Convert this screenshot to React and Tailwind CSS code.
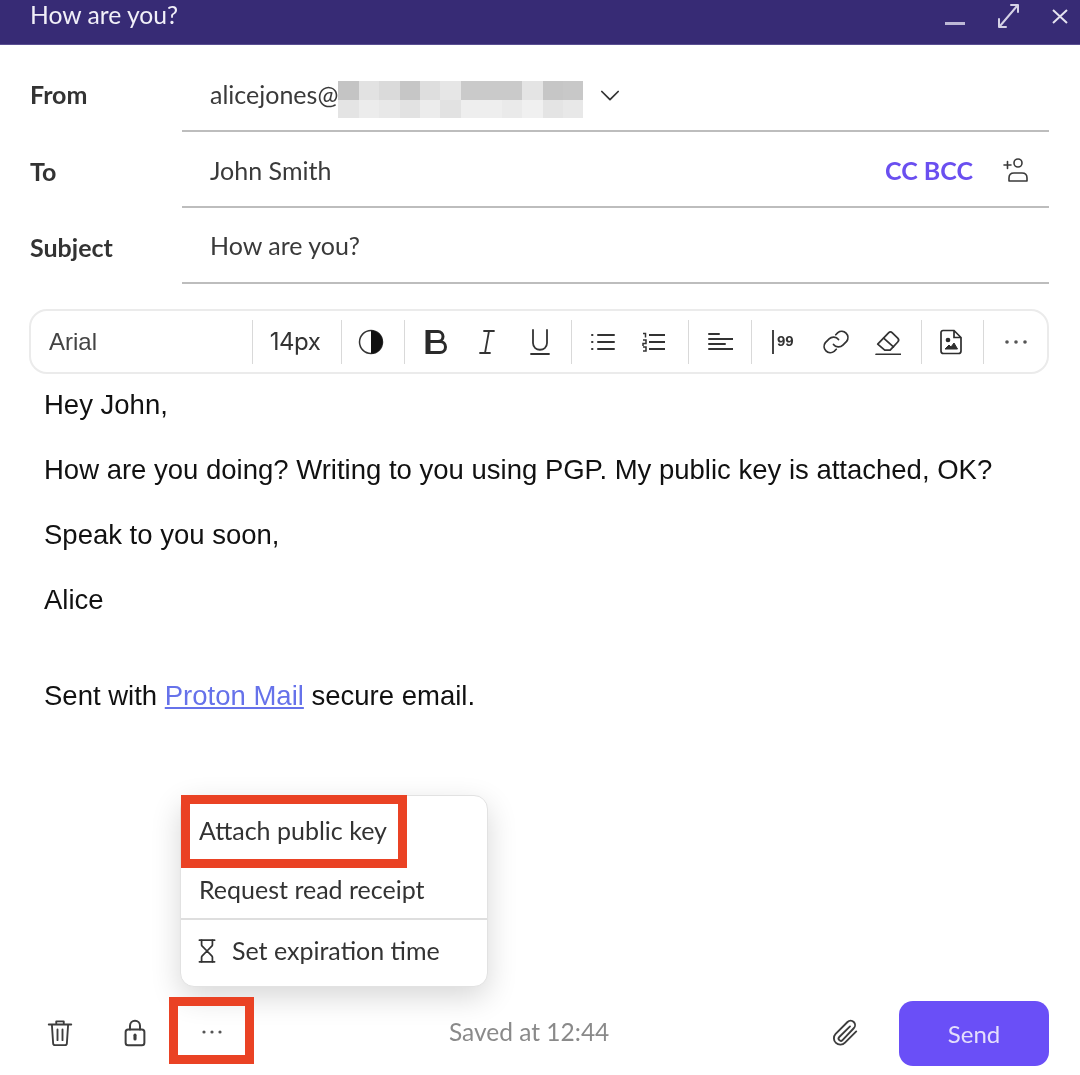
import { Hourglass } from 'lucide-react';

const lato = { fontFamily: 'Lato, sans-serif' };

const mosaicTop = ['#c4c4c4', '#e2e2e2', '#dadada', '#c6c6c6', '#dedede', '#e6e6e6', '#cacaca', '#cacaca', '#cacaca', '#e4e4e4', '#c6c6c6', '#c8c8c8'];
const mosaicBottom = ['#e4e4e4', '#ececec', '#e8e8e8', '#e2e2e2', '#ececec', '#e2e2e2', '#eeeeee', '#eeeeee', '#eaeaea', '#f0f0f0', '#e4e4e4', '#e8e8e8'];

const Icon = ({ w = 24, h = 24, vb = '0 0 24 24', children, sw = 1.5 }) => (
    <svg width={w} height={h} viewBox={vb} fill="none" stroke="currentColor" strokeWidth={sw} strokeLinecap="round" strokeLinejoin="round">
        {children}
    </svg>
);

const Segment = ({ className, children }) => (
    <div className={`flex h-[44px] shrink-0 items-center border-l border-[#d9d9d9] ${className}`}>{children}</div>
);

const Row = ({ label, height, children }) => (
    <div className={`flex items-center pl-[30px] pr-[31px] ${height}`}>
        <div className="w-[152px] shrink-0 pt-[3px] text-[25px] font-bold text-[#333]">{label}</div>
        <div className="flex h-full flex-1 items-center border-b-2 border-[#bdbdbd] pl-[28px] text-[25px] text-[#3a3a3a]">
            {children}
        </div>
    </div>
);

export default function App() {
    return (
        <div className="relative flex h-[1075px] w-[1080px] flex-col overflow-hidden bg-white blur-[0.5px]" style={lato}>
            {/* title bar */}
            <div className="flex h-[45px] shrink-0 items-start justify-between border-b border-[#5a4f92] bg-[#372b75] pl-[30px] pr-[11px] text-white">
                <span className="text-[24.700px] leading-[29px] text-[#f1eff8]">How are you?</span>
                <div className="flex items-start text-[#d5d2e6]">
                    <svg width="20" height="30" viewBox="0 0 20 30" className="mr-[25px]"><rect x="0" y="22" width="20" height="3" fill="#bdb8d6" /></svg>
                    <Icon w={30} h={30} vb="0 0 30 30" sw={2}>
                        <path d="M10 26 27 6M21 5h7v7M9 19v8h7" />
                    </Icon>
                    <svg width="18" height="30" viewBox="0 0 18 30" className="ml-[31px]" fill="none" stroke="#e4e2ef" strokeWidth="2"><path d="M2 10l14 13M16 10 2 23" /></svg>
                </div>
            </div>

            <Row label="From" height="h-[87px] pt-[10px]">
                <div className="flex w-full items-center pt-[5px]">
                    <span>alicejones@</span>
                    <div className="mt-[9px] flex w-[245px] flex-col">
                        <div className="flex h-[19px]">
                            {mosaicTop.map((c, i) => <div key={i} className="flex-1" style={{ backgroundColor: c }} />)}
                        </div>
                        <div className="flex h-[18px]">
                            {mosaicBottom.map((c, i) => <div key={i} className="flex-1" style={{ backgroundColor: c }} />)}
                        </div>
                    </div>
                    <span className="ml-[13px] flex text-[#333]">
                        <Icon w={28} h={28}><path d="m5 9 7 7 7-7" /></Icon>
                    </span>
                </div>
            </Row>
            <Row label="To" height="h-[76px]">
                <span className="pt-[4px]">John Smith</span>
                <span className="ml-auto pr-[29px] pt-[4px] text-[25px] font-bold text-[#6a4ff0]">CC BCC</span>
                <span className="mr-[19px] flex pt-[1px] text-[#3a3a3a]">
                    <Icon w={28} h={28} vb="0 0 28 28" sw={1.6}>
                        <circle cx="16" cy="7" r="4" />
                        <path d="M7 25v-3c0-3 2-5 5-5h8c3 0 5 2 5 5v3zM2 9h7M5.500 5.500v7" />
                    </Icon>
                </span>
            </Row>
            <Row label="Subject" height="h-[76px]">
                <span className="pt-[2px]">How are you?</span>
            </Row>

            {/* editor toolbar */}
            <div className="ml-[29px] mr-[31px] mt-[25px] flex h-[65px] shrink-0 items-center rounded-[18px] border-2 border-[#ebebeb] text-[#333]">
                <div className="w-[221px] shrink-0 pl-[18px] text-[24px] text-[#444]" style={{ fontFamily: '"Liberation Sans", sans-serif' }}>Arial</div>
                <Segment className="w-[89px] justify-center pr-[4px] text-[25px] text-[#333]">
                    <span style={{ fontFamily: 'Inter, sans-serif' }} className="text-[24px] tracking-[-0.5px]">14px</span>
                </Segment>
                <Segment className="w-[63px] justify-center pr-[4px]">
                    <svg width="26" height="26" viewBox="0 0 26 26"><circle cx="13" cy="13" r="11.5" fill="none" stroke="#333" strokeWidth="1.5" /><path d="M13 1.5a11.5 11.5 0 0 1 0 23z" fill="#111" /></svg>
                </Segment>
                <Segment className="w-[167px] pl-[18px]">
                    <div className="flex w-[54px] justify-start">
                        <svg width="26" height="28" viewBox="0 0 26 28" fill="none" stroke="#2a2a2a" strokeWidth="3"><path d="M4 3.500h11a5 5 0 0 1 0 10H4zM4 13.500h13a5.500 5.500 0 0 1 0 11H4zM6 3.500v21" /></svg>
                    </div>
                    <div className="flex w-[51px] justify-start">
                        <Icon w={20} h={26} vb="0 0 20 26" sw={1.8}><path d="M7 2h10M3 24h10M12 2 8 24" /></Icon>
                    </div>
                    <Icon w={24} h={28} vb="0 0 24 28" sw={1.8}><path d="M5 2v13c0 9 14 9 14 0V2M3 26h18" /></Icon>
                </Segment>
                <Segment className="w-[117px] pl-[19px]">
                    <div className="flex w-[51px]">
                        <Icon w={24} h={20} vb="0 0 24 20" sw={2}><path d="M7 3h16M7 10h16M7 17h16M1 3h.5M1 10h.5M1 17h.5" /></Icon>
                    </div>
                    <svg width="24" height="20" viewBox="0 0 24 20" fill="none" stroke="#333" strokeWidth="2"><path d="M7 3h16M7 10h16M7 17h16" /><path d="M1 1.500h2.500v4M1 8h3v3.500H1V14M1 15h3v4H1" strokeWidth="1.500" /></svg>
                </Segment>
                <Segment className="w-[63px] pl-[19px]">
                    <Icon w={25} h={20} vb="0 0 25 20" sw={2}><path d="M1 2h10M1 7h24M1 12h16M1 17h24" /></Icon>
                </Segment>
                <Segment className="w-[170px] pl-[20px]">
                    <div className="flex w-[49px] items-center">
                        <span className="mr-[3px] h-[24px] w-[2px] bg-[#444]" />
                        <span className="pb-[3px] text-[15px] font-bold leading-none text-[#333]" style={{ fontFamily: '"Liberation Sans", sans-serif' }}>99</span>
                    </div>
                    <div className="flex w-[54px]">
                        <Icon w={30} h={30} sw={1.400}>
                            <path d="M10 14a5 5 0 0 0 7.500.5l3-3a5 5 0 0 0-7-7l-1.700 1.700" />
                            <path d="M14 10a5 5 0 0 0-7.500-.5l-3 3a5 5 0 0 0 7 7l1.700-1.700" />
                        </Icon>
                    </div>
                    <Icon w={26} h={26} sw={1.6}>
                        <path d="m2.500 14 10-10.500a2.500 2.500 0 0 1 3.500 0l5 5a2.500 2.500 0 0 1 0 3.500l-7 7.500H9z" />
                        <path d="m8 8.500 9 8M1 23.500h23" />
                    </Icon>
                </Segment>
                <Segment className="w-[62px] justify-center pr-[4px]">
                    <svg width="24" height="26" viewBox="0 0 24 26" fill="none" stroke="#2e2e2e" strokeWidth="1.700">
                        <path d="M4 1.500h11l7 7V22a2.500 2.500 0 0 1-2.500 2.500h-15A2.500 2.500 0 0 1 2 22V3.500a2 2 0 0 1 2-2zM15 1.500v7h7" />
                        <circle cx="9" cy="11" r="1.500" fill="#2e2e2e" />
                        <path d="M6 20l4-4 2 2 3-4 3.500 6z" fill="#2e2e2e" strokeWidth="1" />
                    </svg>
                </Segment>
                <Segment className="flex-1 justify-center">
                    <svg width="24" height="6" viewBox="0 0 24 6" fill="#555"><circle cx="3" cy="3" r="1.800" /><circle cx="12" cy="3" r="1.800" /><circle cx="21" cy="3" r="1.800" /></svg>
                </Segment>
            </div>

            {/* message body */}
            <div className="pl-[44px] pt-[16px] text-[27.500px] leading-[30px] text-[#111]" style={{ fontFamily: '"Liberation Sans", sans-serif' }}>
                <p>Hey John,</p>
                <p className="mt-[35px]">How are you doing? Writing to you using PGP. My public key is attached, OK?</p>
                <p className="mt-[35px]">Speak to you soon,</p>
                <p className="mt-[35px]">Alice</p>
                <p className="mt-[66px]">Sent with <a className="text-[#6672ea] underline">Proton Mail</a> secure email.</p>
            </div>

            {/* footer */}
            <div className="mt-auto flex h-[74px] shrink-0 items-center pb-[9px] pl-[45px] pr-[31px] text-[#3d3d3d]">
                <div className="mb-[4px] flex w-[75px]">
                    <Icon w={30} h={30} sw={1.500}>
                        <path d="M3 6h18M9 5V3.500h6V5M5.500 6l1 15a1.500 1.500 0 0 0 1.500 1.500h8a1.500 1.500 0 0 0 1.500-1.500l1-15M10 10v8.500M14 10v8.500" />
                    </Icon>
                </div>
                <div className="mb-[4px] flex w-[75px]">
                    <Icon w={30} h={30} sw={1.600}>
                        <rect x="4.500" y="10" width="15" height="12.500" rx="2" />
                        <path d="M8 10V7a4 4 0 0 1 8 0v3" />
                        <path d="M12 14.500v3" strokeWidth="2.500" />
                    </Icon>
                </div>
                <div className="mb-[4px] flex w-[34px] justify-center">
                    <svg width="22" height="6" viewBox="0 0 22 6" fill="#555"><circle cx="3" cy="3" r="1.600" /><circle cx="11" cy="3" r="1.600" /><circle cx="19" cy="3" r="1.600" /></svg>
                </div>
                <span className="ml-[220px] shrink-0 whitespace-nowrap pb-[2px] text-[24.500px] text-[#8a8a8a]">Saved at 12:44</span>
                <div className="mb-[4px] ml-auto flex">
                    <Icon w={30} h={30} sw={1.500}>
                        <path d="M21 11.500 12 20.500a5 5 0 0 1-7.500-7L14 4a3.500 3.500 0 0 1 5 5l-9 9.500a1.800 1.800 0 0 1-2.600-2.500L16 7.500" />
                    </Icon>
                </div>
                <button className="ml-[39px] h-[65px] w-[150px] rounded-[14px] bg-[#6a4ff7] text-[24px] text-[#e4defc]">Send</button>
            </div>

            {/* more options menu */}
            <div className="absolute left-[180px] top-[795px] w-[308px] rounded-[14px] border border-[#e2e2e2] bg-white text-[25px] text-[#333] shadow-[0_10px_30px_rgba(0,0,0,0.16)]">
                <div className="flex h-[71px] items-center pl-[18px] pb-[1px]">Attach public key</div>
                <div className="flex h-[53px] items-center border-b-2 border-[#dedede] pl-[18px] pb-[6px]">Request read receipt</div>
                <div className="flex h-[66px] items-center pl-[13px] pb-[5px]">
                    <Hourglass size={26} strokeWidth={1.600} className="mr-[12px] text-[#333]" />
                    Set expiration time
                </div>
            </div>

            {/* red annotation boxes */}
            <div className="absolute left-[181px] top-[795px] h-[73px] w-[226px] border-[9px] border-[#ea4224]" />
            <div className="absolute left-[169px] top-[997px] h-[67px] w-[85px] border-[9px] border-[#ea4224]" />
        </div>
    );
}
